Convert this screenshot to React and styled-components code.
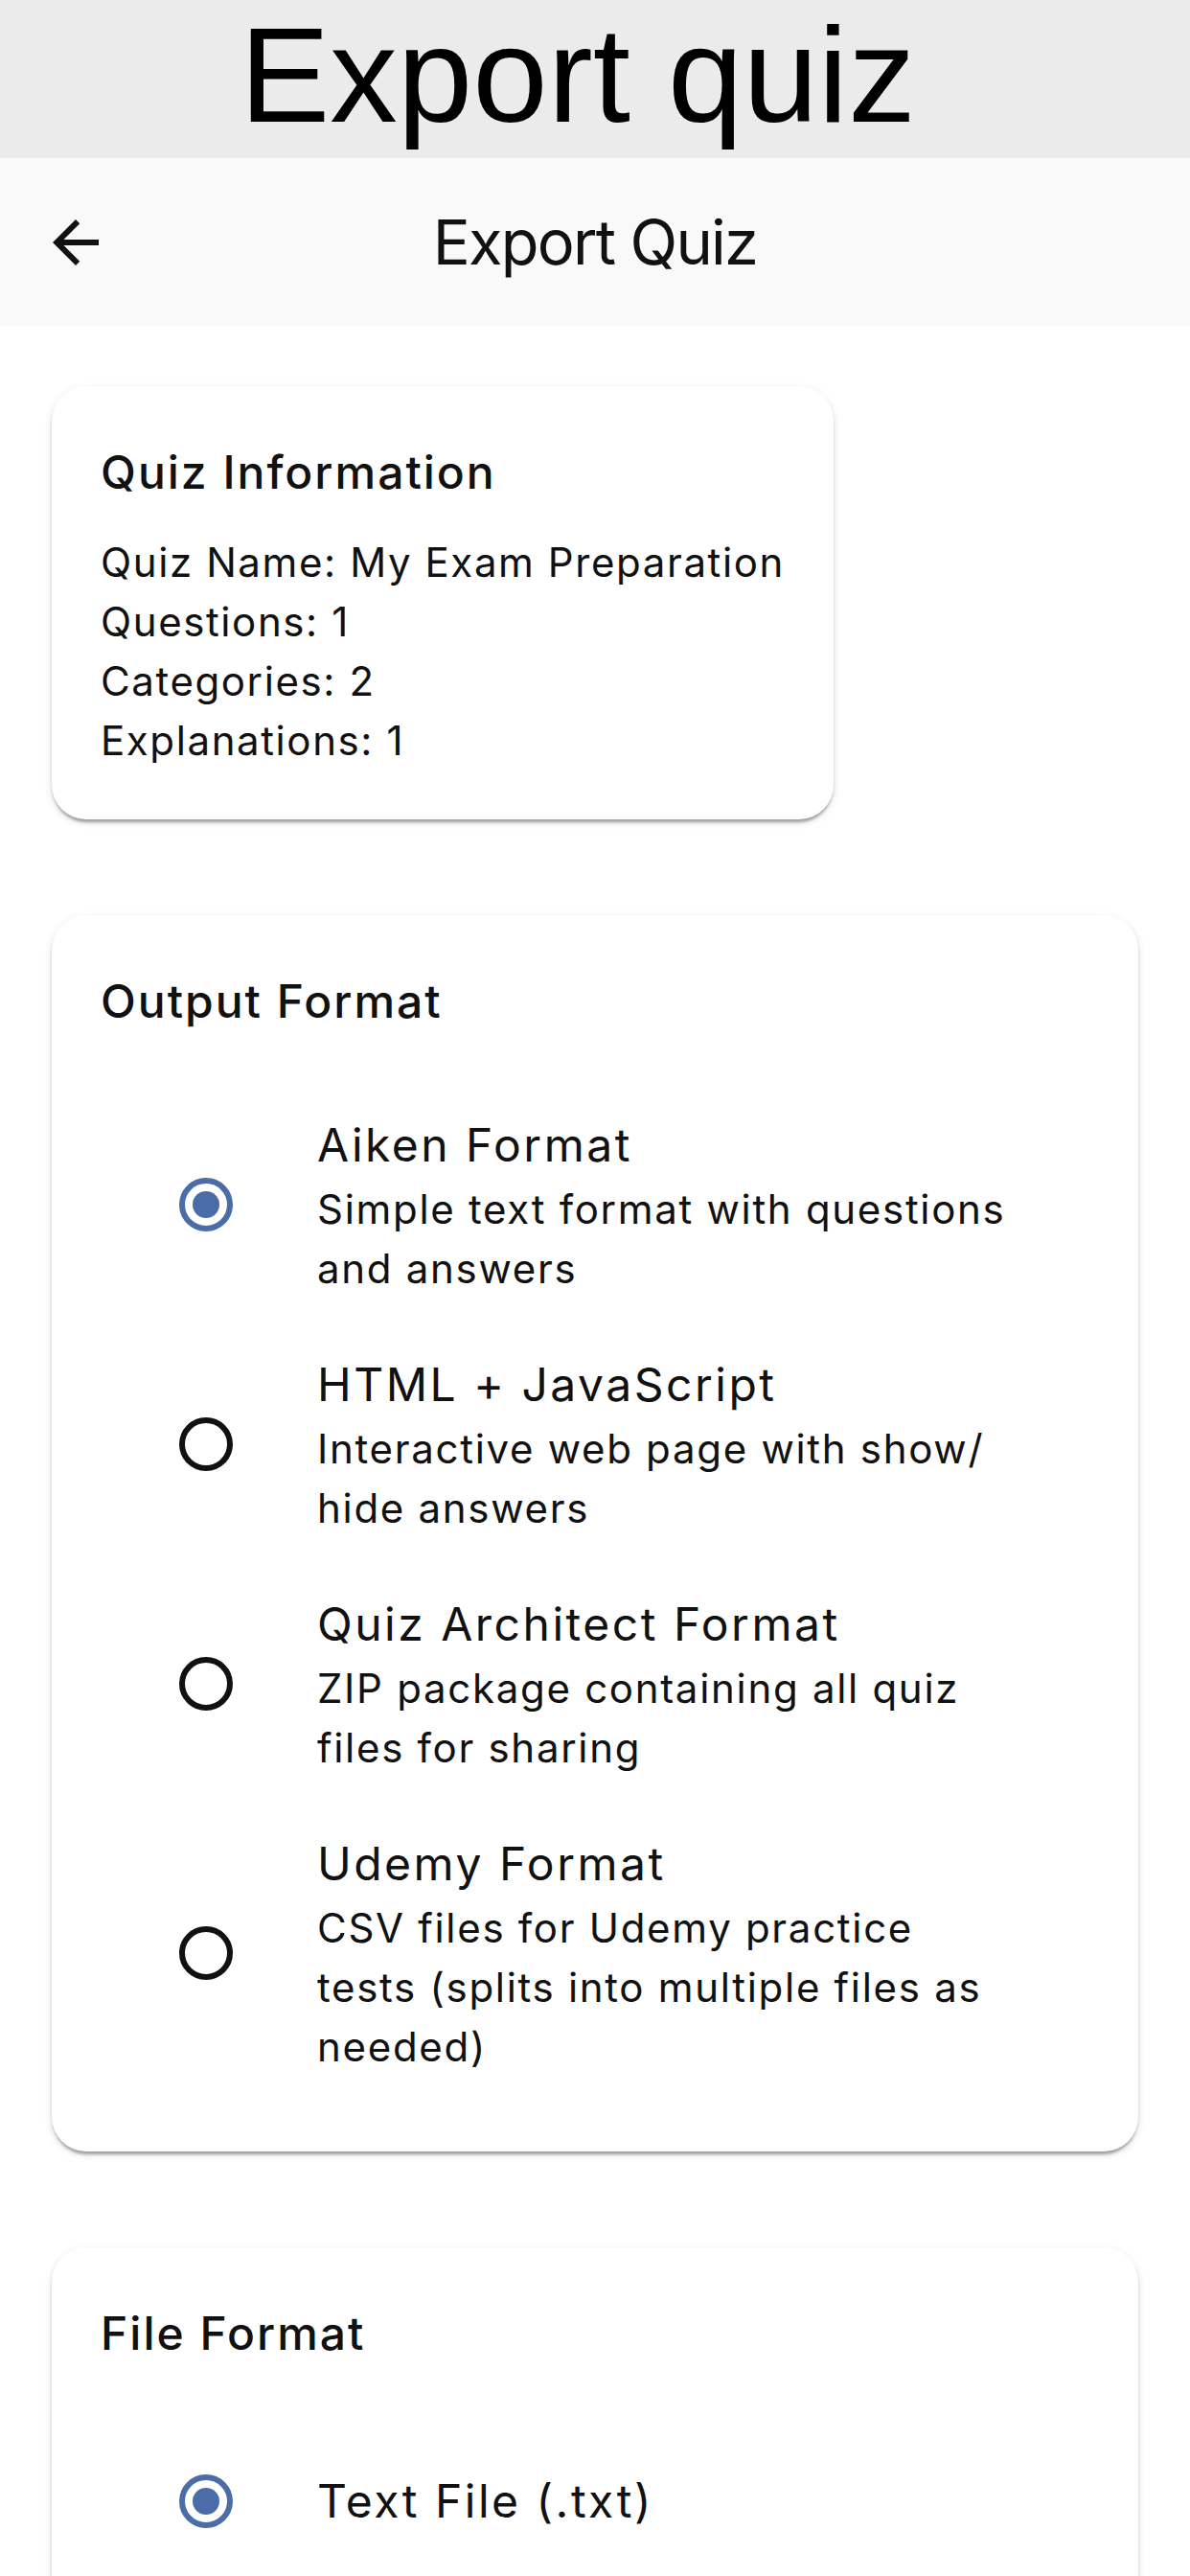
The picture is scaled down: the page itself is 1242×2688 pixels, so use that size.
import React from "react";
import styled, { createGlobalStyle } from "styled-components";

const GlobalStyle = createGlobalStyle`
  html, body {
    margin: 0;
    padding: 0;
    background: #ffffff;
  }
  body {
    font-family: Inter, "Noto Sans", sans-serif;
    color: #111111;
  }
  * {
    box-sizing: border-box;
  }
`;

const Screen = styled.div`
  width: 1242px;
  min-height: 2688px;
  background: #ffffff;
`;

const CaptionBand = styled.div`
  height: 165px;
  background: #ebebeb;
  display: flex;
  justify-content: center;
  padding: 0 36px 8px 0;
  font-family: "Liberation Sans", Arial, sans-serif;
  font-size: 141px;
  line-height: 157px;
  color: #000000;
`;

const AppBar = styled.header`
  height: 175px;
  background: #f9f9f9;
  display: grid;
  grid-template-columns: 1fr auto 1fr;
  align-items: center;
  padding: 0 43px;
`;

const BackButton = styled.button`
  justify-self: start;
  width: 72px;
  height: 72px;
  padding: 0;
  border: none;
  background: none;
  display: flex;
  color: #111111;
`;

const AppBarTitle = styled.h1`
  margin: 0;
  font-size: 65px;
  font-weight: 400;
  line-height: 80px;
  letter-spacing: -1.8px;
  color: #111111;
`;

const Content = styled.main`
  display: flex;
  flex-direction: column;
  align-items: flex-start;
  gap: 100px;
  padding: 63px 54px;
`;

const Card = styled.section`
  align-self: ${(p) => (p.$fit ? "flex-start" : "stretch")};
  background: #ffffff;
  border-radius: 36px;
  padding: 58px 51px 51px;
  box-shadow: 0 6px 3px -3px rgba(0, 0, 0, 0.2), 0 3px 3px rgba(0, 0, 0, 0.14),
    0 3px 9px rgba(0, 0, 0, 0.12);
`;

const CardTitle = styled.h2`
  margin: 0 0 31px;
  font-size: 48px;
  font-weight: 500;
  line-height: 64px;
  letter-spacing: 2px;
`;

const InfoLine = styled.div`
  font-size: 42px;
  line-height: 62px;
  letter-spacing: 1.6px;
  white-space: nowrap;
`;

const OptionList = styled.div`
  display: flex;
  flex-direction: column;
  padding-top: 24px;
`;

const OptionRow = styled.label`
  display: flex;
  align-items: center;
  min-height: 176px;
  padding: 27px 0;
`;

const RadioSlot = styled.span`
  flex: 0 0 226px;
  padding-left: 82px;
  display: flex;
`;

const RadioCircle = styled.span`
  width: 56px;
  height: 56px;
  border-radius: 50%;
  border: 6px solid ${(p) => (p.$checked ? "#4a6da7" : "#111111")};
  display: flex;
  align-items: center;
  justify-content: center;

  &::after {
    content: "";
    width: 28px;
    height: 28px;
    border-radius: 50%;
    background: #4a6da7;
    display: ${(p) => (p.$checked ? "block" : "none")};
  }
`;

const OptionText = styled.span`
  width: 720px;
  display: flex;
  flex-direction: column;
`;

const OptionTitle = styled.span`
  font-size: 48px;
  line-height: 72px;
  letter-spacing: 2.5px;
`;

const OptionDesc = styled.span`
  font-size: 42px;
  line-height: 62px;
  letter-spacing: 1.7px;
`;

const ArrowBack = () => (
  <svg width="72" height="72" viewBox="0 0 24 24" fill="currentColor">
    <path d="M20 11H7.83l5.59-5.59L12 4l-8 8 8 8 1.41-1.41L7.83 13H20v-2z" />
  </svg>
);

const quizInfo = [
  "Quiz Name: My Exam Preparation",
  "Questions: 1",
  "Categories: 2",
  "Explanations: 1",
];

const outputFormats = [
  {
    id: "aiken",
    title: "Aiken Format",
    desc: "Simple text format with questions and answers",
  },
  {
    id: "html",
    title: "HTML + JavaScript",
    desc: "Interactive web page with show/ hide answers",
  },
  {
    id: "qa",
    title: "Quiz Architect Format",
    desc: "ZIP package containing all quiz files for sharing",
  },
  {
    id: "udemy",
    title: "Udemy Format",
    desc: "CSV files for Udemy practice tests (splits into multiple files as needed)",
  },
];

const fileFormats = [{ id: "txt", title: "Text File (.txt)" }];

const Option = ({ item, checked }) => (
  <OptionRow>
    <RadioSlot>
      <RadioCircle $checked={checked} />
    </RadioSlot>
    <OptionText>
      <OptionTitle>{item.title}</OptionTitle>
      {item.desc && <OptionDesc>{item.desc}</OptionDesc>}
    </OptionText>
  </OptionRow>
);

const App = () => {
  const outputFormat = "aiken";
  const fileFormat = "txt";

  return (
    <>
      <GlobalStyle />
      <Screen>
        <CaptionBand>Export quiz</CaptionBand>
        <AppBar>
          <BackButton aria-label="Back">
            <ArrowBack />
          </BackButton>
          <AppBarTitle>Export Quiz</AppBarTitle>
        </AppBar>
        <Content>
          <Card $fit>
            <CardTitle>Quiz Information</CardTitle>
            {quizInfo.map((line) => (
              <InfoLine key={line}>{line}</InfoLine>
            ))}
          </Card>

          <Card>
            <CardTitle>Output Format</CardTitle>
            <OptionList>
              {outputFormats.map((item) => (
                <Option key={item.id} item={item} checked={item.id === outputFormat} />
              ))}
            </OptionList>
          </Card>

          <Card>
            <CardTitle>File Format</CardTitle>
            <OptionList>
              {fileFormats.map((item) => (
                <Option key={item.id} item={item} checked={item.id === fileFormat} />
              ))}
            </OptionList>
          </Card>
        </Content>
      </Screen>
    </>
  );
};

export default App;
